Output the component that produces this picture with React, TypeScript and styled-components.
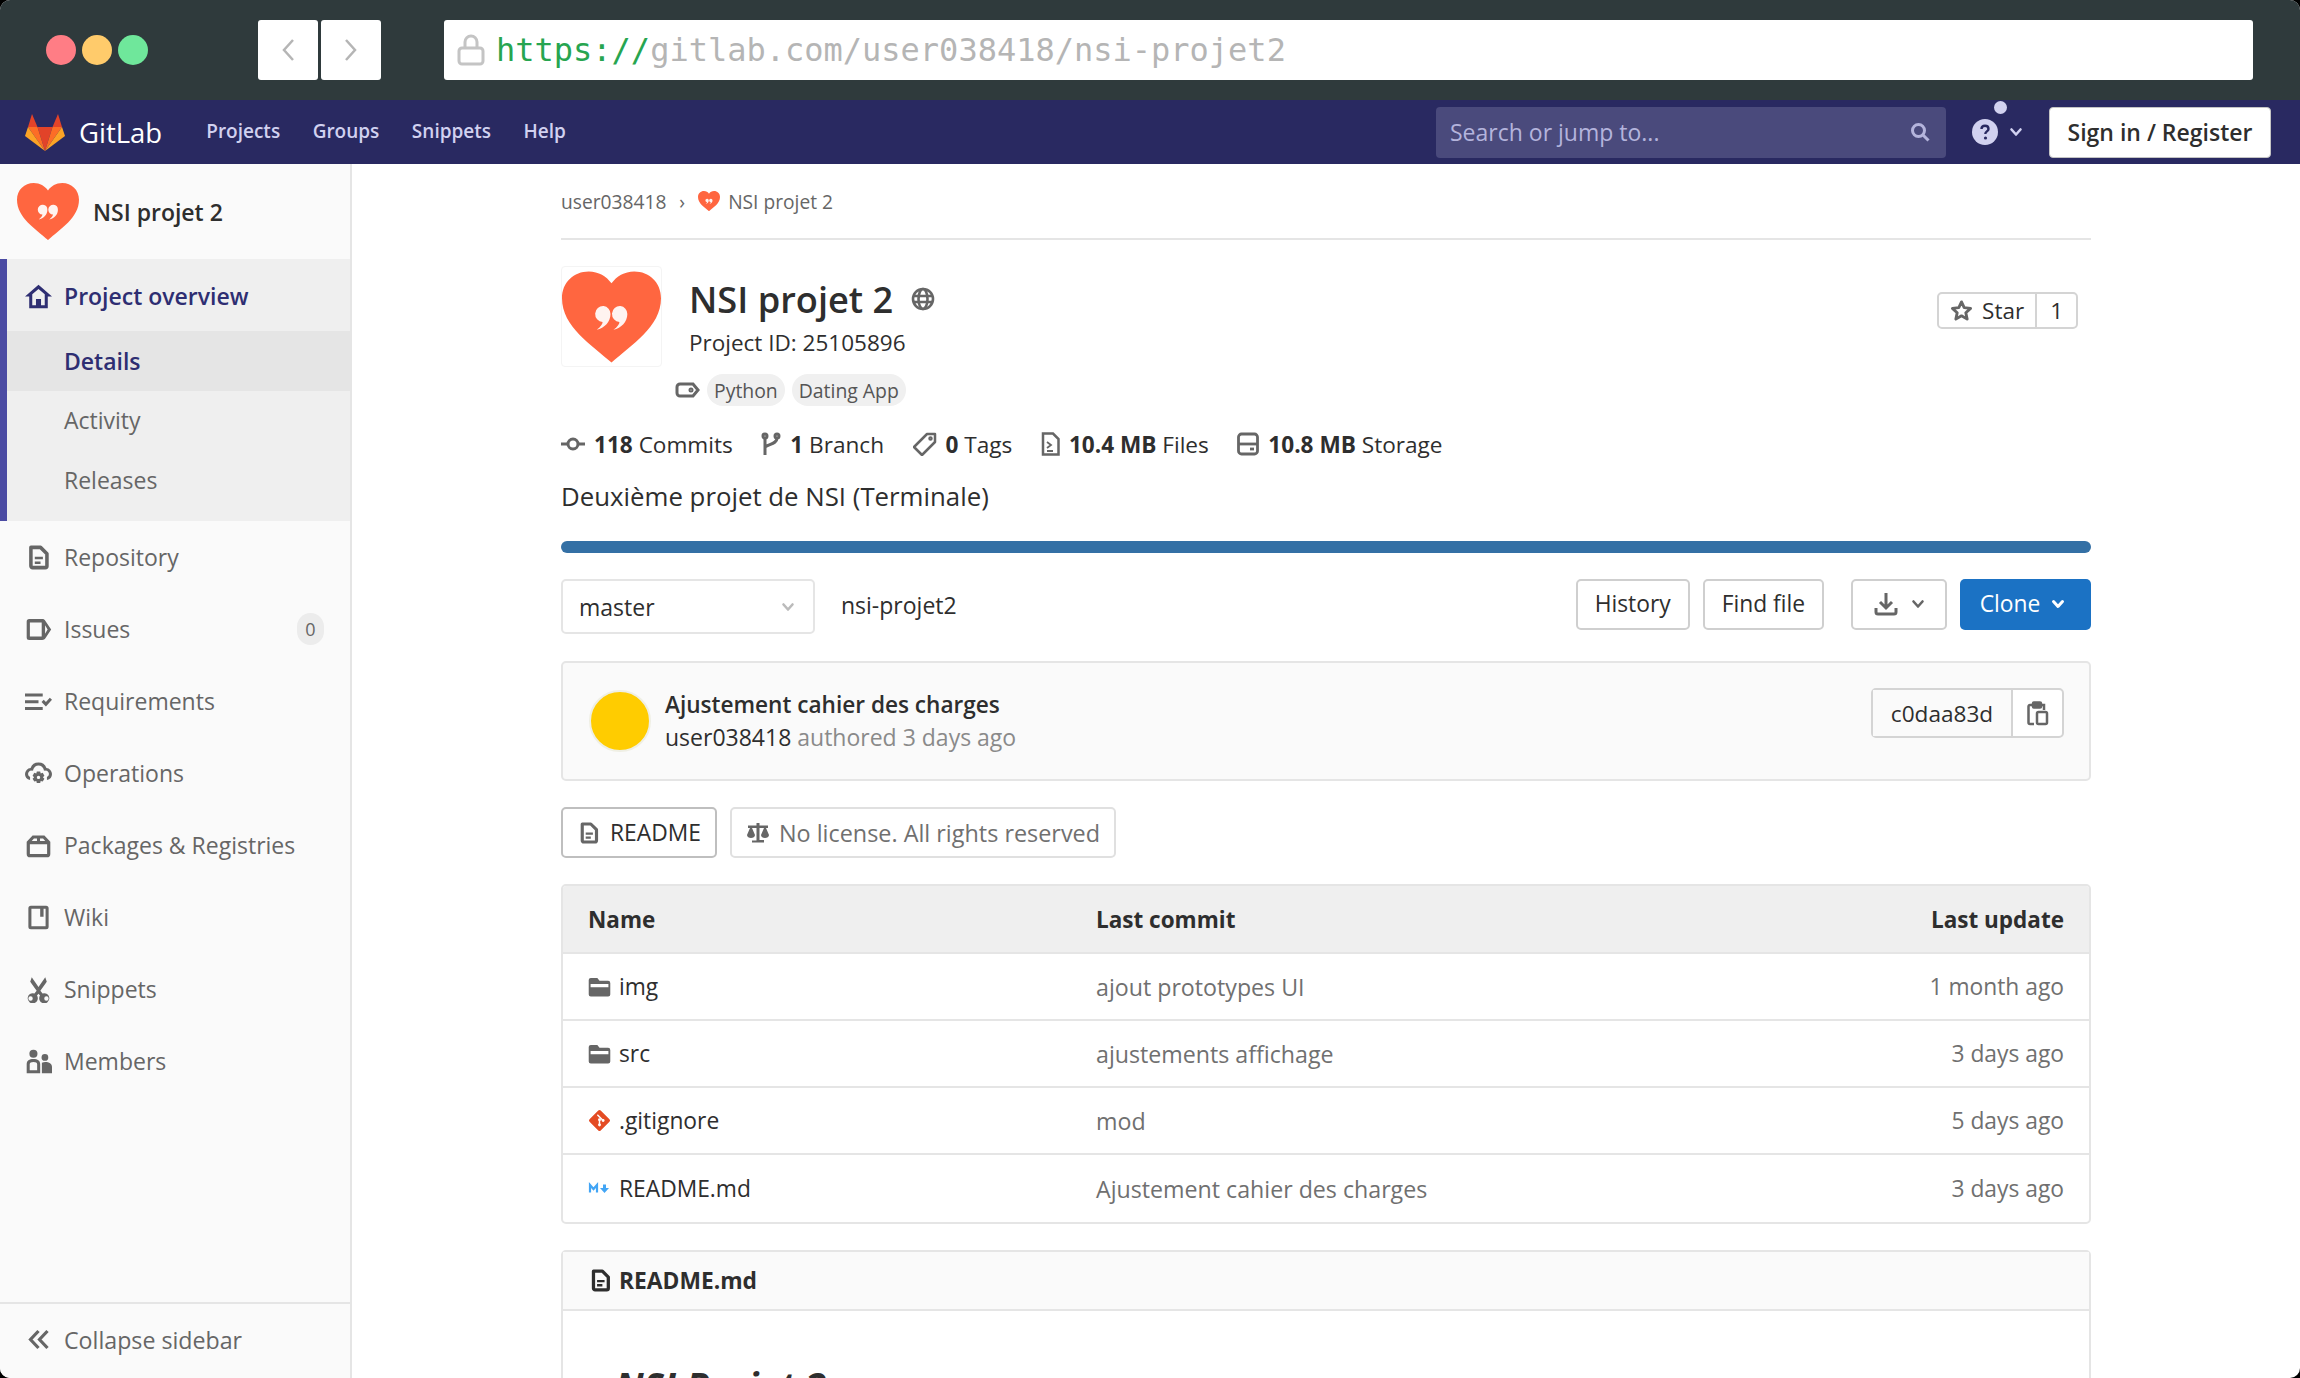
import React from 'react';
import styled, { createGlobalStyle } from 'styled-components';

const GlobalStyle = createGlobalStyle`
  html, body {
    margin: 0;
    padding: 0;
    background: #000;
  }
  * { box-sizing: border-box; }
`;

const ui = '"Open Sans", "Noto Sans", sans-serif';

const Heart: React.FC<{ size: number }> = ({ size }) => (
  <svg width={size} height={size * 0.92} viewBox="0 0 100 92">
    <path d="M50 92C30 74 0 56 0 27 0 11 12 0 27 0c10 0 18 5 23 12C55 5 63 0 73 0c15 0 27 11 27 27 0 29-30 47-50 65z" fill="#ff6640" />
    <path d="M42 35a8 8 0 0 1 7 8c0 8-6 14-14 16 4-3 6-6 6-8a8 8 0 0 1 1-16zm17 0a8 8 0 0 1 7 8c0 8-6 14-14 16 4-3 6-6 6-8a8 8 0 0 1 1-16z" fill="#fff" opacity="0.92" />
  </svg>
);

const IconSvg = styled.svg`
  flex-shrink: 0;
`;

const Icon: React.FC<{ size?: number; color?: string; children: React.ReactNode }> = ({ size = 27, color = '#666', children }) => (
  <IconSvg width={size} height={size} viewBox="0 0 16 16" fill={color}>
    {children}
  </IconSvg>
);

const DocIcon = ({ size = 27, color = '#666' }: { size?: number; color?: string }) => (
  <Icon size={size} color={color}>
    <path d="M3.5 2h5.700L13 5.800V13a1 1 0 0 1-1 1H4.500a1 1 0 0 1-1-1z" fill="none" stroke={color} strokeWidth="2.100" strokeLinejoin="round" />
    <path d="M5.800 7.600h4.800v1.500H5.800zM5.800 10.300h3.400v1.500H5.800z" />
  </Icon>
);

const Chevron = ({ size = 14, color = '#666', width = 2.6 }: { size?: number; color?: string; width?: number }) => (
  <svg width={size} height={size} viewBox="0 0 14 14" fill="none" stroke={color} strokeWidth={width} strokeLinecap="round" strokeLinejoin="round">
    <path d="M2.500 4.500 7 9.500l4.500-5" />
  </svg>
);

const FolderIcon = () => (
  <Icon size={23}>
    <path fillRule="evenodd" d="M2 2h4.500L8 4h6a1.500 1.500 0 0 1 1.500 1.500v8A1.500 1.500 0 0 1 14 15H2a1.500 1.500 0 0 1-1.500-1.500v-10A1.500 1.500 0 0 1 2 2zm-.2 4.300v2.200h12.400V6.300z" />
  </Icon>
);

const navItems = ['Projects', 'Groups', 'Snippets', 'Help'];

const sideItems: { label: string; icon: React.ReactNode; badge?: string }[] = [
  { label: 'Repository', icon: <DocIcon /> },
  {
    label: 'Issues',
    badge: '0',
    icon: (
      <Icon>
        <path fillRule="evenodd" d="M2.500 1.800h7.700c.9 0 1.400.4 1.900 1.100L15.500 8l-3.400 5.200c-.5.700-1 1-1.900 1H2.500A1.500 1.500 0 0 1 1 12.700V3.300a1.500 1.500 0 0 1 1.500-1.500zm.4 2v8.400h7V3.800zm9 1.700v5l1.500-2.500z" />
      </Icon>
    ),
  },
  {
    label: 'Requirements',
    icon: (
      <Icon>
        <path d="M0 3.200h10.500v1.900H0zM0 7.200h8v1.900H0zM0 11.200h10.500v1.900H0zM9.800 8.300l1.300-1.300 1.300 1.300 2.300-2.500L16 7l-3.600 3.900z" />
      </Icon>
    ),
  },
  {
    label: 'Operations',
    icon: (
      <Icon>
        <path d="M8 1.500a5 5 0 0 1 4.700 3.200A3.700 3.700 0 0 1 16 8.300a3.600 3.600 0 0 1-3 3.500V10a1.800 1.800 0 0 0 1.200-1.700 2 2 0 0 0-2.200-2l-.8-.1-.2-.8A3.300 3.300 0 0 0 8 3.200a3.300 3.300 0 0 0-3 2.200l-.2.800-.8.100a2 2 0 0 0-2.200 2A1.800 1.800 0 0 0 3 10v1.800a3.600 3.600 0 0 1-3-3.500 3.700 3.700 0 0 1 3.300-3.600A5 5 0 0 1 8 1.500z" />
        <path fillRule="evenodd" d="M7 6.800h2l.3 1.200 1.200-.4 1 1.700-.9.900.9.900-1 1.700-1.200-.4-.3 1.300H7l-.3-1.300-1.200.4-1-1.700.9-.9-.9-.9 1-1.700 1.200.4zm1 2.500a1 1 0 1 0 0 2 1 1 0 0 0 0-2z" />
      </Icon>
    ),
  },
  {
    label: 'Packages & Registries',
    icon: (
      <Icon>
        <path fillRule="evenodd" d="M4.500 2h7L15 5.800V13a2 2 0 0 1-2 2H3a2 2 0 0 1-2-2V5.800zm2.600 1.800H5.300L4 5.400h3.100zm1.800 0v1.600H12l-1.300-1.600zM2.900 7.200V13h10.200V7.200z" />
      </Icon>
    ),
  },
  {
    label: 'Wiki',
    icon: (
      <Icon>
        <path fillRule="evenodd" d="M3.500 1h9A1.500 1.500 0 0 1 14 2.500v11a1.500 1.500 0 0 1-1.500 1.500h-9A1.500 1.500 0 0 1 2 13.500v-11A1.500 1.500 0 0 1 3.500 1zm.3 1.800v10.400h8.400V2.800h-1.200v4.700H9V2.800z" />
      </Icon>
    ),
  },
  {
    label: 'Snippets',
    icon: (
      <Icon>
        <path fillRule="evenodd" d="M4 .8 8 6.500 12 .8l.9 2.600-3.800 5.300 1.300 1.700a3 3 0 1 1-1.500 1.200L8 10.500l-.9 1.100a3 3 0 1 1-1.500-1.200l1.300-1.700-3.800-5.300zM3.300 12a1.300 1.300 0 1 0 0 2.600 1.300 1.300 0 0 0 0-2.600zm9.400 0a1.300 1.300 0 1 0 0 2.600 1.300 1.300 0 0 0 0-2.600z" />
      </Icon>
    ),
  },
  {
    label: 'Members',
    icon: (
      <Icon>
        <path fillRule="evenodd" d="M5 1a2.400 2.400 0 1 1 0 4.800A2.400 2.400 0 0 1 5 1zM1 15V9.500C1 7.500 2.500 6.500 5 6.500s4 1 4 3V15zm1.800-1.800h4.400V9.600c0-.8-.8-1.300-2.200-1.300s-2.200.5-2.200 1.300zM11.800 3.600a2 2 0 1 1 0 4 2 2 0 0 1 0-4zM10 15V8.700c.7-.3 1.400-.4 2-.4 2.300 0 4 1 4 2.900V15z" />
      </Icon>
    ),
  },
];

const files = [
  { name: 'img', kind: 'folder', commit: 'ajout prototypes UI', date: '1 month ago' },
  { name: 'src', kind: 'folder', commit: 'ajustements affichage', date: '3 days ago' },
  { name: '.gitignore', kind: 'git', commit: 'mod', date: '5 days ago' },
  { name: 'README.md', kind: 'md', commit: 'Ajustement cahier des charges', date: '3 days ago' },
];

const FileIcon: React.FC<{ kind: string }> = ({ kind }) => {
  if (kind === 'folder') return <FolderIcon />;
  if (kind === 'git') {
    return (
      <svg width={23} height={23} viewBox="0 0 16 16">
        <rect x="2.500" y="2.500" width="11" height="11" rx="1.200" transform="rotate(45 8 8)" fill="#e44c24" />
        <path d="M6.500 4 10.500 8M8 7.500v4.500" stroke="#fff" strokeWidth="1" />
        <circle cx="8" cy="7.500" r="1" fill="#fff" />
        <circle cx="8" cy="11" r="1" fill="#fff" />
        <circle cx="10.500" cy="8" r="1" fill="#fff" />
      </svg>
    );
  }
  return (
    <svg width={23} height={23} viewBox="0 0 23 23" fill="none">
      <path d="M2 15.500V8l3.500 4L9 8v7.500" stroke="#42a5f5" strokeWidth="2.200" />
      <path d="M16.500 7.500v4.500" stroke="#42a5f5" strokeWidth="3" />
      <path d="M12 11h9l-4.500 5z" fill="#42a5f5" />
    </svg>
  );
};

export default function App() {
  return (
    <>
      <GlobalStyle />
      <Window>
        <BrowserBar>
          <Lights>
            <Light $color="#ff7d85" />
            <Light $color="#ffcb6b" />
            <Light $color="#6fe79b" />
          </Lights>
          <NavButtons>
            <NavButton>
              <svg width="18" height="32" viewBox="0 0 18 32" fill="none" stroke="#b5b5b5" strokeWidth="2.500"><path d="M14 6 5 16l9 10" /></svg>
            </NavButton>
            <NavButton>
              <svg width="18" height="32" viewBox="0 0 18 32" fill="none" stroke="#b5b5b5" strokeWidth="2.500"><path d="m4 6 9 10-9 10" /></svg>
            </NavButton>
          </NavButtons>
          <UrlBar>
            <svg width="28" height="32" viewBox="0 0 28 32" fill="none" stroke="#c4c4c4" strokeWidth="3">
              <rect x="2" y="14" width="24" height="16" rx="3" />
              <path d="M8 14V8a6 6 0 0 1 12 0v6" />
            </svg>
            <UrlText>
              <UrlScheme>https://</UrlScheme>gitlab.com/user038418/nsi-projet2
            </UrlText>
          </UrlBar>
        </BrowserBar>

        <TopNav>
          <Brand>
            <svg width="40" height="37" viewBox="0 0 40 37">
              <path d="M20 37 12.500 13h15z" fill="#e24329" />
              <path d="M20 37 3 13h9.500z" fill="#fc6d26" />
              <path d="M20 37 37 13h-9.500z" fill="#fc6d26" />
              <path d="M3 13 0 22l20 15z" fill="#fca326" />
              <path d="M37 13l3 9-20 15z" fill="#fca326" />
              <path d="M3 13 7 0l5.500 13z" fill="#e24329" />
              <path d="M37 13 33 0l-5.500 13z" fill="#e24329" />
            </svg>
            <BrandName>GitLab</BrandName>
          </Brand>
          <TopLinks>
            {navItems.map((item) => (
              <TopLink key={item}>{item}</TopLink>
            ))}
          </TopLinks>
          <TopRight>
            <SearchBox>
              <span>Search or jump to...</span>
              <svg width="20" height="20" viewBox="0 0 20 20" fill="none" stroke="#b4b4dc" strokeWidth="3"><circle cx="8.500" cy="8.500" r="6" /><path d="m13 13 5.500 5.500" /></svg>
            </SearchBox>
            <HelpButton>
              <HelpDot />
              <svg width="26" height="26" viewBox="0 0 26 26">
                <circle cx="13" cy="13" r="13" fill="#d1d1f0" />
                <path d="M9.500 10c0-2 1.500-3.300 3.500-3.300s3.500 1.200 3.500 3.200c0 2.500-3.200 2.500-3.200 5" fill="none" stroke="#292961" strokeWidth="2.400" />
                <circle cx="13.500" cy="19" r="1.600" fill="#292961" />
              </svg>
              <Chevron size={14} color="#d1d1f0" />
            </HelpButton>
            <SignIn>Sign in / Register</SignIn>
          </TopRight>
        </TopNav>

        <Body>
          <Sidebar>
            <SideHeader>
              <Heart size={62} />
              <SideTitle>NSI projet 2</SideTitle>
            </SideHeader>
            <ActiveGroup>
              <ActiveHead>
                <Icon color="#2e2e72">
                  <path fillRule="evenodd" d="M8 1 16 8h-2.500v7h-11V8H0zM4.300 13.200h2.200V9.500h3v3.700h2.200V6.700L8 3.500 4.300 6.700z" />
                </Icon>
                <span>Project overview</span>
              </ActiveHead>
              <SubItem $active>Details</SubItem>
              <SubItem>Activity</SubItem>
              <SubItem>Releases</SubItem>
            </ActiveGroup>
            <SideList>
              {sideItems.map((item) => (
                <SideItem key={item.label}>
                  {item.icon}
                  <span>{item.label}</span>
                  {item.badge && <Badge>{item.badge}</Badge>}
                </SideItem>
              ))}
            </SideList>
            <Collapse>
              <svg width="26" height="25" viewBox="0 0 25 25" fill="none" stroke="#666" strokeWidth="3.200"><path d="M12 4 4 12.500l8 8.500M21 4l-8 8.500 8 8.500" /></svg>
              <span>Collapse sidebar</span>
            </Collapse>
          </Sidebar>

          <Main>
            <Breadcrumb>
              <span>user038418</span>
              <BreadSep>›</BreadSep>
              <Heart size={22} />
              <span>NSI projet 2</span>
            </Breadcrumb>

            <ProjectHead>
              <AvatarBox>
                <Heart size={100} />
              </AvatarBox>
              <ProjectInfo>
                <TitleRow>
                  <ProjectTitle>NSI projet 2</ProjectTitle>
                  <svg width="24" height="24" viewBox="0 0 24 24" fill="none" stroke="#666" strokeWidth="2.600">
                    <circle cx="12" cy="12" r="10" />
                    <ellipse cx="12" cy="12" rx="4.500" ry="10" />
                    <path d="M2 9h20M2 15h20" />
                  </svg>
                </TitleRow>
                <ProjectId>Project ID: 25105896</ProjectId>
              </ProjectInfo>
              <StarGroup>
                <StarMain>
                  <svg width="23" height="23" viewBox="0 0 24 24" fill="none" stroke="#666" strokeWidth="3" strokeLinejoin="round"><path d="m12 3 2.800 6 6.700.8-5 4.500 1.400 6.700-5.900-3.400L6.100 21l1.400-6.700-5-4.500 6.700-.8z" /></svg>
                  Star
                </StarMain>
                <StarCount>1</StarCount>
              </StarGroup>
            </ProjectHead>

            <TopicRow>
              <svg width="25" height="16" viewBox="0 0 25 16" fill="none" stroke="#666" strokeWidth="3">
                <path d="M5 2h13l5 6-5 6H5a3 3 0 0 1-3-3V5a3 3 0 0 1 3-3z" />
                <circle cx="16" cy="8" r="1" />
              </svg>
              <Topic>Python</Topic>
              <Topic>Dating App</Topic>
            </TopicRow>

            <Stats>
              <Stat>
                <svg width="24" height="16" viewBox="0 0 24 16" fill="none" stroke="#666" strokeWidth="3"><circle cx="12" cy="8" r="5" /><path d="M0 8h7M17 8h7" /></svg>
                <span><b>118</b> Commits</span>
              </Stat>
              <Stat>
                <svg width="20" height="24" viewBox="0 0 20 24" fill="none" stroke="#666" strokeWidth="3"><circle cx="4" cy="4" r="2" /><circle cx="16" cy="4" r="2" /><path d="M4 6v17M16 6c0 6-8 6-12 9" /></svg>
                <span><b>1</b> Branch</span>
              </Stat>
              <Stat>
                <svg width="24" height="24" viewBox="0 0 24 24" fill="none" stroke="#666" strokeWidth="2.500" strokeLinejoin="round"><path d="M14 2h8v8L9 23l-8-8z" /><circle cx="17.500" cy="6.500" r="1" /></svg>
                <span><b>0</b> Tags</span>
              </Stat>
              <Stat>
                <svg width="19" height="24" viewBox="0 0 19 24" fill="none" stroke="#666" strokeWidth="2.500"><path d="M2 1.500h10l5.500 5.500v15.500H2z" /><path d="m6 10 4 3-4 3M6 19h6" strokeWidth="1.800" /></svg>
                <span><b>10.4 MB</b> Files</span>
              </Stat>
              <Stat>
                <svg width="22" height="24" viewBox="0 0 22 24" fill="none" stroke="#666" strokeWidth="2.800"><rect x="1.500" y="2" width="19" height="20" rx="3" /><path d="M1.500 12h19" /><path d="M13 17h4" /></svg>
                <span><b>10.8 MB</b> Storage</span>
              </Stat>
            </Stats>

            <Description>Deuxième projet de NSI (Terminale)</Description>
            <LangBar />

            <RepoToolbar>
              <BranchSelect>
                <span>master</span>
                <Chevron size={14} color="#bbb" />
              </BranchSelect>
              <RepoName>nsi-projet2</RepoName>
              <ToolActions>
                <ToolButton>History</ToolButton>
                <ToolButton>Find file</ToolButton>
                <DownloadButton>
                  <svg width="24" height="24" viewBox="0 0 24 24" fill="none" stroke="#666" strokeWidth="3"><path d="M12 1v14M6 10l6 6 6-6" /><path d="M2 16v4a2 2 0 0 0 2 2h16a2 2 0 0 0 2-2v-4" /></svg>
                  <Chevron size={14} />
                </DownloadButton>
                <CloneButton>
                  Clone
                  <Chevron size={14} color="#fff" width={3} />
                </CloneButton>
              </ToolActions>
            </RepoToolbar>

            <CommitBox>
              <CommitAvatar />
              <CommitText>
                <CommitTitle>Ajustement cahier des charges</CommitTitle>
                <CommitMeta>
                  user038418 <CommitDate>authored 3 days ago</CommitDate>
                </CommitMeta>
              </CommitText>
              <ShaGroup>
                <ShaLabel>c0daa83d</ShaLabel>
                <ShaCopy>
                  <svg width="22" height="25" viewBox="0 0 22 25" fill="none" stroke="#666" strokeWidth="2.500">
                    <path d="M6 4H3a1.500 1.500 0 0 0-1.500 1.500v16A1.500 1.500 0 0 0 3 23h4" />
                    <path d="M14 4h3v5" />
                    <rect x="6" y="1.500" width="8" height="5" rx="1" fill="#666" />
                    <rect x="10" y="11" width="10" height="12" rx="1.500" />
                  </svg>
                </ShaCopy>
              </ShaGroup>
            </CommitBox>

            <Pills>
              <Pill $strong>
                <DocIcon size={24} />
                README
              </Pill>
              <Pill $muted>
                <svg width="24" height="22" viewBox="0 0 24 22" fill="#666">
                  <path d="M10.500 1h3v2.500H22v2.500h-2l3 7c0 2-2 3-4 3s-4-1-4-3l3-7h-4.500v12H18v2.500H6V18.500h4.500V6H6l3 7c0 2-2 3-4 3s-4-1-4-3l3-7H2V3.500h8.500z" />
                </svg>
                No license. All rights reserved
              </Pill>
            </Pills>

            <FileTable>
              <FileHead>
                <NameCell><b>Name</b></NameCell>
                <CommitCell><b>Last commit</b></CommitCell>
                <DateCell><b>Last update</b></DateCell>
              </FileHead>
              {files.map((file) => (
                <FileRow key={file.name}>
                  <NameCell>
                    <FileIcon kind={file.kind} />
                    {file.name}
                  </NameCell>
                  <CommitCell $muted>{file.commit}</CommitCell>
                  <DateCell $muted>{file.date}</DateCell>
                </FileRow>
              ))}
            </FileTable>

            <ReadmeBox>
              <ReadmeHead>
                <DocIcon size={25} color="#2e2e2e" />
                README.md
              </ReadmeHead>
              <ReadmeBody>
                <ReadmeTitle>NSI Projet 2</ReadmeTitle>
              </ReadmeBody>
            </ReadmeBox>
          </Main>
        </Body>
      </Window>
    </>
  );
}

const Window = styled.div`
  width: 2300px;
  height: 1378px;
  overflow: hidden;
  display: flex;
  flex-direction: column;
  background: #fff;
  border-radius: 10px;
  font-family: ${ui};
  color: #2e2e2e;
`;

const BrowserBar = styled.div`
  height: 100px;
  flex-shrink: 0;
  display: flex;
  align-items: center;
  background: #2f3a3c;
  padding: 0 47px 0 46px;
`;

const Lights = styled.div`
  display: flex;
  gap: 6px;
  margin-right: 110px;
`;

const Light = styled.div<{ $color: string }>`
  width: 30px;
  height: 30px;
  border-radius: 50%;
  background: ${(p) => p.$color};
`;

const NavButtons = styled.div`
  display: flex;
  gap: 3px;
  margin-right: 63px;
`;

const NavButton = styled.div`
  width: 60px;
  height: 60px;
  background: #fff;
  border-radius: 3px;
  display: flex;
  align-items: center;
  justify-content: center;
`;

const UrlBar = styled.div`
  flex: 1;
  height: 60px;
  background: #fff;
  border-radius: 3px;
  display: flex;
  align-items: center;
  gap: 11px;
  padding-left: 13px;
`;

const UrlText = styled.div`
  font-family: "DejaVu Sans Mono", "Liberation Mono", monospace;
  font-size: 32px;
  color: #b5b5b5;
  white-space: nowrap;
`;

const UrlScheme = styled.span`
  color: #27a550;
`;

const TopNav = styled.div`
  height: 64px;
  flex-shrink: 0;
  display: flex;
  align-items: center;
  background: #292961;
  padding: 0 29px 0 25px;
`;

const Brand = styled.div`
  display: flex;
  align-items: center;
  gap: 14px;
  margin-right: 44px;
`;

const BrandName = styled.span`
  font-size: 27.5px;
  color: #fff;
`;

const TopLinks = styled.div`
  display: flex;
  gap: 32.5px;
  margin-top: -2px;
`;

const TopLink = styled.span`
  font-size: 19px;
  font-weight: 600;
  color: #d1d1f0;
`;

const TopRight = styled.div`
  margin-left: auto;
  display: flex;
  align-items: center;
`;

const SearchBox = styled.div`
  width: 510px;
  height: 51px;
  border-radius: 4px;
  background: #4a4a7c;
  color: #b4b4dc;
  font-size: 23px;
  display: flex;
  align-items: center;
  justify-content: space-between;
  padding: 0 16px 0 14px;
`;

const HelpButton = styled.div`
  position: relative;
  display: flex;
  align-items: center;
  gap: 11px;
  margin: 0 26px;
`;

const HelpDot = styled.span`
  position: absolute;
  top: -18px;
  left: 22px;
  width: 13px;
  height: 13px;
  border-radius: 50%;
  background: #d1d1f0;
`;

const SignIn = styled.div`
  width: 222px;
  height: 51px;
  background: #fff;
  border: 1px solid #c4c4c4;
  border-radius: 4px;
  font-size: 23px;
  font-weight: 600;
  color: #2e2e2e;
  display: flex;
  align-items: center;
  justify-content: center;
`;

const Body = styled.div`
  flex: 1;
  min-height: 0;
  display: flex;
`;

const Sidebar = styled.aside`
  width: 352px;
  flex-shrink: 0;
  display: flex;
  flex-direction: column;
  background: #fafafa;
  border-right: 2px solid #e5e5e5;
`;

const SideHeader = styled.div`
  height: 95px;
  display: flex;
  align-items: center;
  gap: 14px;
  padding-left: 17px;
  flex-shrink: 0;
`;

const SideTitle = styled.span`
  font-size: 23px;
  font-weight: 600;
`;

const ActiveGroup = styled.div`
  background: #efefef;
  border-left: 7px solid #4b4ba3;
  height: 262px;
  flex-shrink: 0;
`;

const ActiveHead = styled.div`
  height: 72px;
  display: flex;
  align-items: center;
  gap: 12px;
  padding: 2px 0 0 18px;
  font-size: 23px;
  font-weight: 600;
  color: #2e2e72;
`;

const SubItem = styled.div<{ $active?: boolean }>`
  height: 59.5px;
  display: flex;
  align-items: center;
  padding-left: 57px;
  font-size: 23px;
  font-weight: ${(p) => (p.$active ? 600 : 400)};
  color: ${(p) => (p.$active ? '#2e2e72' : '#666')};
  background: ${(p) => (p.$active ? '#e5e5e5' : 'transparent')};
`;

const SideList = styled.div`
  flex: 1;
`;

const SideItem = styled.div`
  height: 72px;
  display: flex;
  align-items: center;
  gap: 12px;
  padding: 0 26px 0 25px;
  font-size: 23px;
  color: #666;
`;

const Badge = styled.span`
  margin-left: auto;
  width: 27px;
  height: 32px;
  border-radius: 14px;
  background: #ececec;
  font-size: 18px;
  display: flex;
  align-items: center;
  justify-content: center;
`;

const Collapse = styled.div`
  height: 76px;
  flex-shrink: 0;
  border-top: 2px solid #e5e5e5;
  display: flex;
  align-items: center;
  gap: 12px;
  padding: 0 0 3px 26px;
  font-size: 23.2px;
  color: #666;
`;

const Main = styled.main`
  flex: 1;
  min-width: 0;
  padding: 0 209px;
  overflow: hidden;
`;

const Breadcrumb = styled.div`
  height: 76px;
  display: flex;
  align-items: center;
  gap: 8px;
  border-bottom: 2px solid #e5e5e5;
  font-size: 19.2px;
  color: #666;
`;

const BreadSep = styled.span`
  margin: 0 5px;
`;

const ProjectHead = styled.div`
  display: flex;
  align-items: flex-start;
  padding-top: 26px;
`;

const AvatarBox = styled.div`
  width: 101px;
  height: 101px;
  border-radius: 4px;
  border: 1px solid #f4f4f4;
  flex-shrink: 0;
  margin-right: 27px;
  display: flex;
  align-items: center;
  justify-content: center;
`;

const ProjectInfo = styled.div`
  flex: 1;
  padding-top: 7px;
`;

const TitleRow = styled.div`
  display: flex;
  align-items: center;
  gap: 18px;
  height: 52px;
`;

const ProjectTitle = styled.h1`
  margin: 0;
  font-size: 36.2px;
  font-weight: 600;
  color: #2e2e2e;
`;

const ProjectId = styled.div`
  margin-top: 2px;
  font-size: 22.5px;
`;

const StarGroup = styled.div`
  display: flex;
  height: 37px;
  margin: 26px 13px 0 0;
  border: 2px solid #d4d4d4;
  border-radius: 5px;
  font-size: 22.5px;
`;

const StarMain = styled.div`
  display: flex;
  align-items: center;
  gap: 9px;
  padding: 0 11px;
  border-right: 2px solid #d4d4d4;
`;

const StarCount = styled.div`
  display: flex;
  align-items: center;
  padding: 0 13px;
`;

const TopicRow = styled.div`
  display: flex;
  align-items: center;
  gap: 7px;
  margin: 7px 0 0 114px;
`;

const Topic = styled.span`
  height: 32px;
  padding: 0 7px;
  border-radius: 16px;
  background: #f0f0f0;
  font-size: 19.4px;
  color: #555;
  display: flex;
  align-items: center;
`;

const Stats = styled.div`
  display: flex;
  gap: 28.5px;
  margin-top: 22px;
  height: 32px;
  font-size: 22.6px;
  & b {
    font-weight: 700;
  }
`;

const Stat = styled.div`
  display: flex;
  align-items: center;
  gap: 9px;
`;

const Description = styled.p`
  margin: 19px 0 0;
  font-size: 25.8px;
  line-height: 34px;
`;

const LangBar = styled.div`
  height: 12px;
  margin-top: 28px;
  border-radius: 6px;
  background: #3470a5;
`;

const RepoToolbar = styled.div`
  display: flex;
  align-items: flex-start;
  margin-top: 26px;
`;

const BranchSelect = styled.div`
  width: 254px;
  height: 55px;
  border: 2px solid #e5e5e5;
  border-radius: 5px;
  display: flex;
  align-items: center;
  justify-content: space-between;
  padding: 0 18px 0 16px;
  font-size: 23px;
`;

const RepoName = styled.span`
  margin-left: 26px;
  line-height: 52px;
  font-size: 23px;
`;

const ToolActions = styled.div`
  margin-left: auto;
  display: flex;
  gap: 13px;
`;

const ToolButton = styled.div`
  height: 51px;
  padding: 0 17px 2px;
  border: 2px solid #cfcfcf;
  border-radius: 5px;
  font-size: 22.8px;
  display: flex;
  align-items: center;
`;

const DownloadButton = styled(ToolButton)`
  width: 96px;
  margin-left: 14px;
  gap: 13px;
  justify-content: center;
`;

const CloneButton = styled(ToolButton)`
  width: 131px;
  border: none;
  background: #1b72c4;
  color: #fff;
  justify-content: center;
  gap: 11px;
  padding: 0 6px 2px 0;
`;

const CommitBox = styled.div`
  height: 120px;
  margin-top: 27px;
  border: 2px solid #e5e5e5;
  border-radius: 5px;
  background: #fafafa;
  display: flex;
  align-items: center;
  padding: 0 25px 0 26px;
`;

const CommitAvatar = styled.div`
  width: 62px;
  height: 62px;
  border-radius: 50%;
  background: #ffcc00;
  border: 2px solid #efefe4;
  flex-shrink: 0;
  margin-right: 14px;
`;

const CommitText = styled.div`
  flex: 1;
`;

const CommitTitle = styled.div`
  font-size: 22.6px;
  font-weight: 600;
  line-height: 33px;
`;

const CommitMeta = styled.div`
  font-size: 23px;
  line-height: 33px;
`;

const CommitDate = styled.span`
  color: #8a8a8a;
`;

const ShaGroup = styled.div`
  display: flex;
  align-self: flex-start;
  margin-top: 25px;
  height: 50px;
  border: 2px solid #d4d4d4;
  border-radius: 5px;
  background: #fff;
`;

const ShaLabel = styled.div`
  width: 140px;
  background: #fafafa;
  border-right: 2px solid #d4d4d4;
  font-size: 22.6px;
  display: flex;
  align-items: center;
  justify-content: center;
`;

const ShaCopy = styled.div`
  width: 49px;
  display: flex;
  align-items: center;
  justify-content: center;
`;

const Pills = styled.div`
  display: flex;
  gap: 13px;
  margin-top: 26px;
`;

const Pill = styled.div<{ $strong?: boolean; $muted?: boolean }>`
  height: 51px;
  padding: 0 14px;
  border: 2px solid ${(p) => (p.$strong ? '#bfbfbf' : '#e0e0e0')};
  border-radius: 5px;
  font-size: ${(p) => (p.$muted ? '23.4px' : '22.8px')};
  color: ${(p) => (p.$muted ? '#707070' : '#2e2e2e')};
  display: flex;
  align-items: center;
  gap: 9px;
`;

const FileTable = styled.div`
  margin-top: 26px;
  border: 2px solid #e5e5e5;
  border-radius: 5px;
  overflow: hidden;
`;

const RowGrid = styled.div`
  display: grid;
  grid-template-columns: 508px 1fr 340px;
  align-items: center;
  padding: 0 25px;
`;

const FileHead = styled(RowGrid)`
  height: 68px;
  background: #efefef;
  border-bottom: 2px solid #e5e5e5;
  font-size: 22.5px;
  & b {
    font-weight: 700;
  }
`;

const FileRow = styled(RowGrid)`
  height: 67px;
  border-bottom: 2px solid #e5e5e5;
  font-size: 22.8px;
  &:last-child {
    border-bottom: none;
  }
`;

const NameCell = styled.div`
  display: flex;
  align-items: center;
  gap: 8px;
`;

const CommitCell = styled.div<{ $muted?: boolean }>`
  color: ${(p) => (p.$muted ? '#707070' : 'inherit')};
  font-size: ${(p) => (p.$muted ? '23.2px' : 'inherit')};
`;

const DateCell = styled.div<{ $muted?: boolean }>`
  text-align: right;
  color: ${(p) => (p.$muted ? '#707070' : 'inherit')};
`;

const ReadmeBox = styled.div`
  margin-top: 26px;
  border: 2px solid #e5e5e5;
  border-radius: 5px;
  height: 300px;
`;

const ReadmeHead = styled.div`
  height: 59px;
  background: #fafafa;
  border-bottom: 2px solid #e5e5e5;
  display: flex;
  align-items: center;
  gap: 6px;
  padding-left: 25px;
  font-size: 22.8px;
  font-weight: 700;
`;

const ReadmeBody = styled.div`
  padding: 48px 52px;
`;

const ReadmeTitle = styled.h1`
  margin: 0;
  font-size: 38px;
  font-weight: 700;
  font-style: italic;
`;
